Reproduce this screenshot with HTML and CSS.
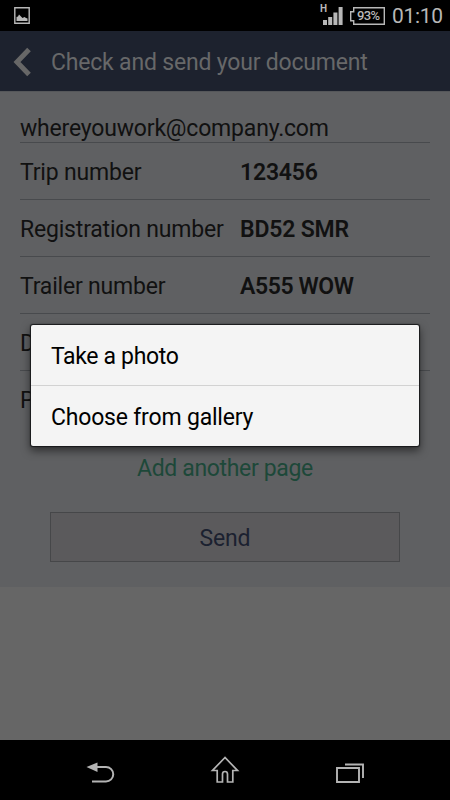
FILE: index.html
```
<!DOCTYPE html>
<html lang="en">
<head>
<meta charset="utf-8">
<title>Check and send your document</title>
<link rel="stylesheet" href="styles.css">
</head>
<body>
<div class="phone">
  <div class="status">
    <svg class="pic" width="16" height="17" viewBox="0 0 16 17"><path d="M.8.8h14.4v15.4H.8z" fill="none" stroke="#b8b8b8" stroke-width="1.4"/><path d="M2.500 14v-4l1.500-.5 1-2 2 2 1.500 1.500 2-1 1.500 1 1.500.5V14z" fill="#b8b8b8"/></svg>
    <span class="h">H</span>
    <svg class="signal" width="20" height="18" viewBox="0 0 20 18" fill="#b8b8b8"><path d="M0 13h4v5H0zM5.200 10h4v8h-4zM10.400 5.500h4V18h-4zM15.600 0h4v18h-4z"/></svg>
    <div class="battery">
      <svg width="35" height="18" viewBox="0 0 35 18" fill="none" stroke="#b8b8b8" stroke-width="1.400"><path d="M3.700.7h30.600v16.600H3.700v-3.500H.7V4.700h3z"/></svg>
      <span class="percent">93%</span>
    </div>
    <span class="clock">01:10</span>
  </div>
  <header class="header">
    <svg class="chevron" width="18" height="30" viewBox="0 0 18 30"><path d="M16 2.500 4 15l12 12.500" fill="none" stroke="#676767" stroke-width="5"/></svg>
    <h1 class="title">Check and send your document</h1>
  </header>
  <main class="form">
    <div class="email"><span>whereyouwork@company.com</span></div>
    <div class="row"><span>Trip number</span><b>123456</b></div>
    <div class="row"><span>Registration number</span><b>BD52 SMR</b></div>
    <div class="row"><span>Trailer number</span><b class="trailer">A555 WOW</b></div>
    <div class="row"><span>D</span></div>
    <div class="row last"><span>P</span></div>
    <div class="add">Add another page</div>
    <div class="send">Send</div>
  </main>
  <div class="rest"></div>
  <nav class="nav">
    <svg width="30" height="30" viewBox="0 0 30 30"><path d="M10 12h11a7 7 0 0 1 0 14.500H7" fill="none" stroke="#b4b4b4" stroke-width="2"/><path d="M1.500 12 12.500 7.500v9.500z" fill="#b4b4b4"/></svg>
    <svg width="30" height="30" viewBox="0 0 30 30"><path d="M15 2.500 2.500 15.500h4.700V27h5.300v-8q0-2.500 2.500-2.500t2.500 2.500v8h5.300V15.500h4.700z" fill="none" stroke="#b4b4b4" stroke-width="1.700"/></svg>
    <svg width="30" height="30" viewBox="0 0 30 30" fill="none" stroke="#b4b4b4" stroke-width="1.900"><path d="M2 13h22v14H2zM10 9.500h18V23"/></svg>
  </nav>
  <div class="dialog">
    <div class="option"><span class="take">Take a photo</span></div>
    <div class="option"><span>Choose from gallery</span></div>
  </div>
</div>
</body>
</html>
```
FILE: styles.css
```
* { box-sizing: border-box; }
body { margin: 0; background: #000; }
.phone {
  position: relative;
  width: 450px; height: 800px;
  display: flex; flex-direction: column;
  overflow: hidden;
  font: 23px/28px Roboto, sans-serif;
  letter-spacing: -.19px;
  color: #111;
}
.phone span, .phone b { white-space: nowrap; }
.status {
  height: 31px; flex: none;
  display: flex; align-items: flex-start;
  background: #000; color: #b8b8b8;
  padding: 7px 7px 0 14px;
}
.status > * { flex: none; }
.h { margin: -3px 0 0 290px; width: 3px; font-size: 10px; line-height: 10px; font-weight: 700; }
.battery { position: relative; width: 35px; height: 18px; margin-left: 7px; }
.battery svg { display: block; }
.percent { position: absolute; left: 7px; top: 1px; font-size: 13px; line-height: 16px; font-weight: 500; letter-spacing: -.6px; }
.clock { margin: -5px 0 0 7px; font-size: 21px; line-height: 28px; letter-spacing: -.3px; }
.header {
  height: 60px; flex: none;
  display: flex; align-items: center;
  padding-left: 13px;
  background: #1d222e; color: #676869;
}
.chevron { margin-top: 2px; }
.title { margin: 3px 0 0 20px; font-size: 23px; font-weight: 400; white-space: nowrap; }
.form {
  height: 496px; flex: none;
  background: #5f6062;
  border-top: 1px solid #55575a;
  padding: 0 20px;
}
.email { height: 51px; padding-top: 23px; border-bottom: 1px solid #484a4d; }
.row {
  height: 57px;
  display: grid; grid-template-columns: 220px 1fr;
  padding-top: 16px;
  border-bottom: 1px solid #484a4d;
}
.row b { font-weight: 600; }
.row .trailer { letter-spacing: -.4px; }
.row.last { border: 0; }
.add { height: 28px; margin-top: 27px; text-align: center; color: #1d4839; letter-spacing: -.35px; }
.send {
  height: 50px; margin: 29px 30px 0;
  padding-top: 3px;
  display: flex; align-items: center; justify-content: center;
  border: 1px solid #464749;
  background: #5b5a5c; color: #1b2130;
}
.rest { flex: 1; background: #666; }
.nav {
  height: 60px; flex: none;
  display: flex; justify-content: space-between; align-items: center;
  padding: 0 85px;
  background: #000;
}
.dialog {
  position: absolute; left: 31px; top: 325px;
  width: 388px; height: 121px;
  display: flex; flex-direction: column;
  background: #f4f4f4; color: #000;
  border-radius: 2px;
  box-shadow: 0 0 1px 1px #17181a, 0 4px 9px 1px rgba(0,0,0,.5);
}
.option { flex: 1; padding: 18px 0 0 20px; }
.option + .option { border-top: 1px solid #d2d2d2; }
.take { letter-spacing: -.35px; }
```
